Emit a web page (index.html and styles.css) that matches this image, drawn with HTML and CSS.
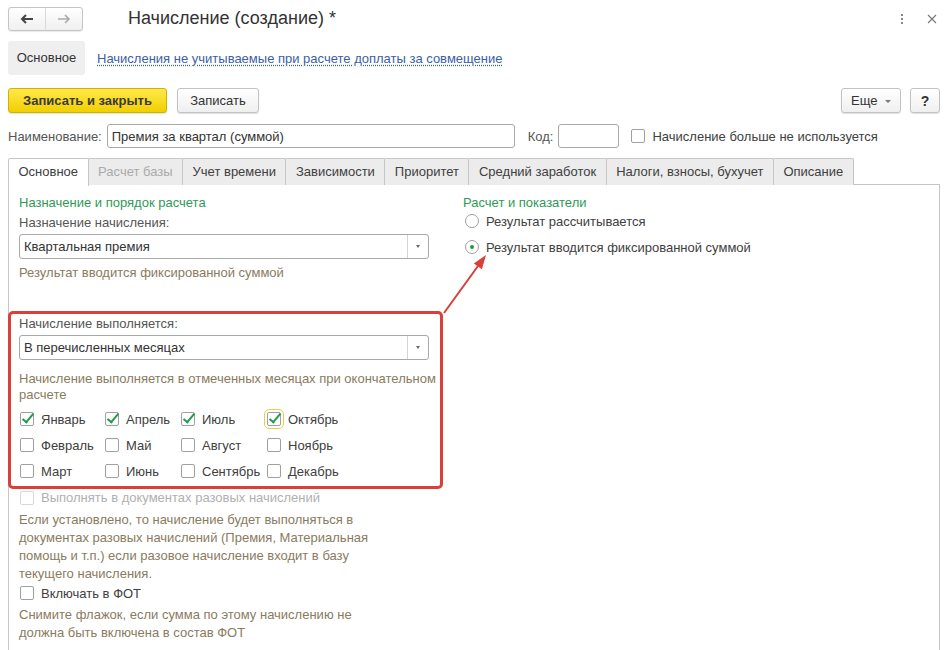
FILE: index.html
```html
<!DOCTYPE html>
<html lang="ru">
<head>
  <meta charset="UTF-8">
  <title>Начисление (создание)</title>
  <link rel="stylesheet" href="styles.css">
</head>
<body>
  <!-- Title bar -->
  <div class="topbar">
    <div class="nav">
      <span class="nav-btn">
        <svg width="14" height="10" viewBox="0 0 14 10"><path d="M13 5H2M6 1L2 5l4 4" fill="none" stroke="#444" stroke-width="2"/></svg>
      </span>
      <span class="nav-btn">
        <svg width="14" height="10" viewBox="0 0 14 10"><path d="M1 5h11M8 1l4 4-4 4" fill="none" stroke="#aaa" stroke-width="1.6"/></svg>
      </span>
    </div>
    <div class="title">Начисление (создание) *</div>
    <div class="spacer"></div>
    <span class="more-dots"><i></i><i></i><i></i></span>
    <svg class="close" width="10" height="10" viewBox="0 0 10 10"><path d="M1 1l8 8M9 1L1 9" stroke="#777" stroke-width="1.1"/></svg>
  </div>

  <!-- Form sections -->
  <div class="sections">
    <span class="section-current">Основное</span>
    <a class="section-link" href="#">Начисления не учитываемые при расчете доплаты за совмещение</a>
  </div>

  <!-- Command bar -->
  <div class="commandbar">
    <button class="btn btn-default">Записать и закрыть</button>
    <button class="btn btn-plain">Записать</button>
    <div class="spacer"></div>
    <button class="btn btn-plain btn-more">Еще <span class="caret"></span></button>
    <button class="btn btn-plain btn-help">?</button>
  </div>

  <!-- Name row -->
  <div class="name-row">
    <span class="label">Наименование:</span>
    <input class="field field-name" type="text" value="Премия за квартал (суммой)">
    <span class="label label-code">Код:</span>
    <input class="field field-code" type="text" value="">
    <span class="check"></span>
    <span class="check-label">Начисление больше не используется</span>
  </div>

  <!-- Tabs -->
  <div class="tabs">
    <span class="tab active">Основное</span>
    <span class="tab disabled">Расчет базы</span>
    <span class="tab">Учет времени</span>
    <span class="tab">Зависимости</span>
    <span class="tab">Приоритет</span>
    <span class="tab">Средний заработок</span>
    <span class="tab">Налоги, взносы, бухучет</span>
    <span class="tab">Описание</span>
  </div>

  <div class="panel">
    <div class="col-left">
      <div class="group-title">Назначение и порядок расчета</div>
      <div class="field-title">Назначение начисления:</div>
      <div class="select">
        <span class="select-text">Квартальная премия</span>
        <span class="select-btn"><span class="select-caret"></span></span>
      </div>
      <div class="hint hint-single">Результат вводится фиксированной суммой</div>

      <div class="highlight">
        <div class="field-title">Начисление выполняется:</div>
        <div class="select">
          <span class="select-text">В перечисленных месяцах</span>
          <span class="select-btn"><span class="select-caret"></span></span>
        </div>
        <div class="hint hint-months">Начисление выполняется в отмеченных месяцах при окончательном расчете</div>
        <div class="months">
          <label class="month"><span class="check checked"></span>Январь</label>
          <label class="month"><span class="check checked"></span>Апрель</label>
          <label class="month"><span class="check checked"></span>Июль</label>
          <label class="month"><span class="check checked focused"></span>Октябрь</label>
          <label class="month"><span class="check"></span>Февраль</label>
          <label class="month"><span class="check"></span>Май</label>
          <label class="month"><span class="check"></span>Август</label>
          <label class="month"><span class="check"></span>Ноябрь</label>
          <label class="month"><span class="check"></span>Март</label>
          <label class="month"><span class="check"></span>Июнь</label>
          <label class="month"><span class="check"></span>Сентябрь</label>
          <label class="month"><span class="check"></span>Декабрь</label>
        </div>
      </div>

      <div class="option disabled"><span class="check"></span>Выполнять в документах разовых начислений</div>
      <div class="hint hint-block">Если установлено, то начисление будет выполняться в документах разовых начислений (Премия, Материальная помощь и т.п.) если разовое начисление входит в базу текущего начисления.</div>
      <div class="option option-fot"><span class="check"></span>Включать в ФОТ</div>
      <div class="hint hint-block">Снимите флажок, если сумма по этому начислению не должна быть включена в состав ФОТ</div>
    </div>

    <div class="col-right">
      <div class="group-title">Расчет и показатели</div>
      <div class="radio-row"><span class="radio"></span>Результат рассчитывается</div>
      <div class="radio-row"><span class="radio selected"></span>Результат вводится фиксированной суммой</div>
    </div>
  </div>

  <!-- annotation arrow -->
  <svg class="annotation" width="948" height="650" viewBox="0 0 948 650">
    <path d="M444 313L478 266" stroke="#d9403a" stroke-width="2"/>
    <polygon points="486,255 481.9,269.2 473.8,263.4" fill="#d9403a"/>
  </svg>
</body>
</html>
```

FILE: styles.css
```css
body {
  font-family: "Liberation Sans", Arial, sans-serif;
  font-size: 13px;
  color: #404040;
  background-color: #fff;
  margin: 0;
  padding: 0;
  overflow: hidden;
}
.spacer {
  flex: 1;
}

/* title bar */
.topbar {
  display: flex;
  align-items: center;
  height: 24px;
  margin: 7px 8px 0;
}
.nav {
  display: flex;
  height: 22px;
  border: 1px solid #c4c4c4;
  border-radius: 3px;
  background: linear-gradient(#fff, #f0f0f0);
  box-shadow: 0 1px 1px rgba(0, 0, 0, 0.08);
}
.nav-btn {
  width: 36px;
  display: flex;
  align-items: center;
  justify-content: center;
}
.nav-btn + .nav-btn {
  border-left: 1px solid #dadada;
}
.title {
  margin-left: 45px;
  font-size: 18px;
  color: #333;
  margin-top: -2px;
}
.more-dots {
  display: flex;
  flex-direction: column;
  gap: 2px;
  margin-right: 24px;
}
.more-dots i {
  width: 2px;
  height: 2px;
  background-color: #888;
}
.close {
  margin-right: 3px;
}

/* sections */
.sections {
  display: flex;
  align-items: center;
  height: 34px;
  margin: 10px 8px 0;
}
.section-current {
  width: 77px;
  height: 34px;
  line-height: 34px;
  text-align: center;
  background-color: #efefef;
  border-radius: 3px;
  color: #333;
}
.section-link {
  margin-left: 12px;
  color: #3a5ea8;
  text-decoration: underline dotted;
  text-underline-offset: 2px;
}

/* command bar */
.commandbar {
  display: flex;
  align-items: center;
  height: 25px;
  margin: 13px 8px 0;
}
.btn {
  height: 25px;
  font-family: inherit;
  font-size: 13px;
  border-radius: 3px;
  padding: 0;
  cursor: pointer;
  box-shadow: 0 1px 1px rgba(0, 0, 0, 0.12);
}
.btn-default {
  width: 159px;
  font-weight: bold;
  color: #3a3a3a;
  background: linear-gradient(#ffe94a, #f2cf00);
  border: 1px solid #d2b100;
}
.btn-plain {
  color: #333;
  background: linear-gradient(#fff, #efefef);
  border: 1px solid #c2c2c2;
}
.commandbar .btn-plain {
  width: 82px;
  margin-left: 10px;
}
.commandbar .btn-more {
  width: 60px;
  margin-left: 0;
}
.commandbar .btn-help {
  width: 30px;
  margin-left: 9px;
  font-weight: bold;
  font-size: 14px;
}
.caret {
  display: inline-block;
  vertical-align: middle;
  margin-left: 4px;
  border-left: 3px solid transparent;
  border-right: 3px solid transparent;
  border-top: 3px solid #777;
}

/* name row */
.name-row {
  display: flex;
  align-items: center;
  height: 24px;
  margin: 11px 8px 0;
}
.label {
  color: #555;
}
.field {
  height: 24px;
  box-sizing: border-box;
  border: 1px solid #a8a8a8;
  border-radius: 3px;
  padding: 0 4px;
  font-family: inherit;
  font-size: 13px;
  color: #333;
}
.field-name {
  width: 408px;
  margin-left: 5px;
}
.label-code {
  margin-left: 13px;
}
.field-code {
  width: 61px;
  margin-left: 5px;
}
.check {
  display: inline-block;
  flex: none;
  width: 14px;
  height: 14px;
  box-sizing: border-box;
  border: 1px solid #a0a0a0;
  border-radius: 2px;
  background-color: #fff;
  position: relative;
}
.name-row .check {
  margin-left: 12px;
}
.check-label {
  margin-left: 7px;
  color: #404040;
}
.check.checked::after {
  content: "";
  position: absolute;
  left: 4px;
  top: -2px;
  width: 4px;
  height: 10px;
  border-right: 2.5px solid #1e9c4a;
  border-bottom: 2.5px solid #1e9c4a;
  transform: rotate(40deg);
}
.check.focused {
  outline: 1px solid #e7d048;
  outline-offset: 2px;
}

/* tabs */
.tabs {
  display: flex;
  height: 27px;
  margin: 9px 8px 0;
}
.tab {
  height: 26px;
  line-height: 25px;
  padding: 0 9.5px;
  border: 1px solid #c6c6c6;
  border-bottom: none;
  margin-right: -1px;
  background-color: #ececec;
  color: #404040;
  border-radius: 2px 2px 0 0;
  margin-top: 1px;
}
.tab.active {
  background-color: #fff;
  height: 27px;
  position: relative;
  z-index: 1;
}
.tab.disabled {
  color: #aaa;
}

/* main panel */
.panel {
  display: flex;
  margin: 0 8px;
  border: 1px solid #c6c6c6;
  border-bottom: none;
  height: 455px;
  padding-top: 10px;
}
.col-left {
  width: 410px;
  padding-left: 10px;
}
.col-right {
  margin-left: 34px;
}
.group-title {
  height: 16px;
  line-height: 16px;
  color: #2e9a57;
}
.field-title {
  height: 16px;
  line-height: 16px;
  margin-top: 4px;
  color: #555;
}
.select {
  display: flex;
  height: 25px;
  box-sizing: border-box;
  margin-top: 3px;
  border: 1px solid #a8a8a8;
  border-radius: 3px;
  background-color: #fff;
}
.select-text {
  flex: 1;
  line-height: 23px;
  padding-left: 4px;
  color: #333;
}
.select-btn {
  width: 20px;
  border-left: 1px solid #d4d4d4;
  display: flex;
  align-items: center;
  justify-content: center;
}
.select-caret {
  border-left: 2.5px solid transparent;
  border-right: 2.5px solid transparent;
  border-top: 3px solid #666;
}
.hint {
  color: #8a7b5e;
  line-height: 16px;
}
.hint-single {
  margin-top: 6px;
}

/* highlighted block */
.highlight {
  margin: 30px 0 0 -11px;
  width: 410px;
  padding: 2px 11px 2px 8px;
  border: 3px solid #d9403a;
  border-radius: 5px;
}
.highlight .field-title {
  margin-top: 0;
}
.hint-months {
  margin-top: 11px;
  width: 424px;
}
.months {
  display: grid;
  grid-template-columns: 85px 76px 86px auto;
  margin-top: 3px;
}
.month {
  display: flex;
  align-items: center;
  height: 26px;
  color: #404040;
}
.month .check {
  margin: 0 7px 0 1px;
}
.option {
  display: flex;
  align-items: center;
  height: 20px;
  color: #404040;
}
.option .check {
  margin: 0 7px 0 1px;
}
.option.disabled {
  height: 17px;
  color: #b0b0b0;
}
.option.disabled .check {
  border-color: #d8d8d8;
}
.hint-block {
  line-height: 18px;
  width: 360px;
  margin-top: 5px;
  margin-bottom: 0;
}
.option-fot + .hint-block {
  margin-top: 3px;
}

/* radios */
.radio-row {
  display: flex;
  align-items: center;
  height: 20px;
  margin-top: 0;
  color: #404040;
}
.radio-row + .radio-row {
  margin-top: 6px;
}
.radio {
  width: 14px;
  height: 14px;
  box-sizing: border-box;
  border: 1px solid #a0a0a0;
  border-radius: 50%;
  margin: 0 7px 0 2px;
  position: relative;
}
.radio.selected::after {
  content: "";
  position: absolute;
  left: 4px;
  top: 4px;
  width: 4px;
  height: 4px;
  border-radius: 50%;
  background-color: #1e9c4a;
}

.annotation {
  position: absolute;
  left: 0;
  top: 0;
  pointer-events: none;
}
```
